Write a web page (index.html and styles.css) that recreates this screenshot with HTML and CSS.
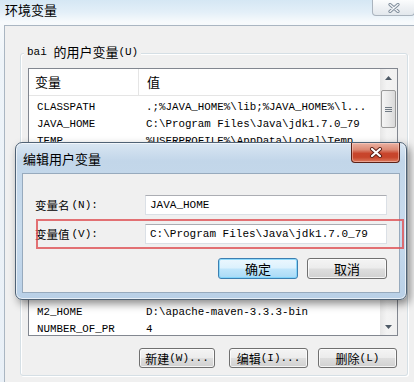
FILE: index.html
```html
<!DOCTYPE html>
<html>
<head>
<meta charset="utf-8">
<title>环境变量</title>
<link rel="stylesheet" href="styles.css">
</head>
<body>
<div class="win">
  <div class="titlebar">
    <span class="title">环境变量</span>
    <div class="wclose">
      <svg width="12" height="10" viewBox="0 0 12 10"><path d="M2 1.5 L10 8.5 M10 1.5 L2 8.5" stroke="#7d8b99" stroke-width="3.2" stroke-linecap="round"/><path d="M2 1.5 L10 8.5 M10 1.5 L2 8.5" stroke="#f4f6f8" stroke-width="1.4" stroke-linecap="round"/></svg>
    </div>
  </div>
  <div class="client">
    <div class="group">
      <div class="legend"><span>bai&nbsp;</span><span class="zh z13">的用户变量</span><span>(U)</span></div>
      <div class="list">
        <div class="lmain">
          <div class="lhead"><div class="c1 zh">变量</div><div class="c2 zh">值</div></div>
          <div class="rows">
            <div class="row"><span class="c1">CLASSPATH</span><span class="c2">.;%JAVA_HOME%\lib;%JAVA_HOME%\l...</span></div>
            <div class="row"><span class="c1">JAVA_HOME</span><span class="c2">C:\Program Files\Java\jdk1.7.0_79</span></div>
            <div class="row"><span class="c1">TEMP</span><span class="c2">%USERPROFILE%\AppData\Local\Temp</span></div>
            <div class="rows-covered"></div>
            <div class="row"><span class="c1">M2_HOME</span><span class="c2">D:\apache-maven-3.3.3-bin</span></div>
            <div class="row"><span class="c1">NUMBER_OF_PR</span><span class="c2">4</span></div>
          </div>
        </div>
        <div class="vscroll">
          <div class="sbtn"><svg width="7" height="4" viewBox="0 0 7 4"><path d="M0 4 L3.5 0 L7 4 Z" fill="#4e5a66"/></svg></div>
          <div class="thumb"><svg width="7" height="7" viewBox="0 0 7 7"><path d="M0 1.5 H7 M0 3.5 H7 M0 5.5 H7" stroke="#707a84" stroke-width="1"/></svg></div>
          <div class="strack"></div>
          <div class="sbtn"><svg width="7" height="4" viewBox="0 0 7 4"><path d="M0 0 L3.5 4 L7 0 Z" fill="#4e5a66"/></svg></div>
        </div>
      </div>
      <div class="gbtns">
        <div class="btn b-new"><span class="zh z12">新建</span><span>(W)...</span></div>
        <div class="btn b-edit"><span class="zh z12">编辑</span><span>(I)...</span></div>
        <div class="btn b-del"><span class="zh z12">删除</span><span>(L)</span></div>
      </div>
    </div>
  </div>

  <div class="dialog">
    <div class="dtitlebar">
      <span class="dtitle zh">编辑用户变量</span>
      <div class="dclose">
        <svg width="14" height="11" viewBox="0 0 14 11"><path d="M3 2 L11 9 M11 2 L3 9" stroke="#5a1d14" stroke-width="4" stroke-linecap="round"/><path d="M3 2 L11 9 M11 2 L3 9" stroke="#ffffff" stroke-width="2.2" stroke-linecap="round"/></svg>
      </div>
    </div>
    <div class="dclient">
      <div class="frow">
        <div class="flabel"><span class="zh z11">变量名</span><span>(N):</span></div>
        <div class="finput">JAVA_HOME</div>
      </div>
      <div class="frow r2">
        <div class="flabel"><span class="zh z11">变量值</span><span>(V):</span></div>
        <div class="finput">C:\Program Files\Java\jdk1.7.0_79</div>
      </div>
      <div class="dbtns">
        <div class="btn dbtn ok"><span class="zh z13">确定</span></div>
        <div class="btn dbtn"><span class="zh z13">取消</span></div>
      </div>
    </div>
    <div class="mark"></div>
  </div>
</div>
</body>
</html>
```
FILE: styles.css
```css
* { box-sizing: border-box; margin: 0; padding: 0; }
html, body { width: 414px; height: 382px; overflow: hidden; }
body {
  font-family: "Liberation Mono", "Noto Sans CJK SC", monospace;
  font-size: 11px;
  color: #000;
  background: #eef4f9;
}
.zh { font-family: "Noto Sans CJK SC", sans-serif; }
.z11 { font-size: 11.5px; }
.z12 { font-size: 12px; }
.z13 { font-size: 13px; }

.win {
  position: relative;
  width: 414px;
  height: 382px;
  display: flex;
  flex-direction: column;
  background: linear-gradient(180deg, #d5e7f4 0, #e3eff8 12px, #f7fafc 22px, #eef4f9 60px, #e9f0f7 100%);
}
.titlebar {
  height: 25px;
  flex: none;
  display: flex;
  justify-content: space-between;
  align-items: flex-start;
}
.title {
  font-family: "Noto Sans CJK SC", sans-serif;
  font-size: 13px;
  line-height: 20px;
  padding-left: 5px;
}
.wclose {
  width: 43px;
  height: 16px;
  margin-right: -1px;
  border: 1px solid #aab4be;
  border-top: none;
  border-radius: 0 0 4px 4px;
  background: linear-gradient(180deg, #fbfcfd, #eef1f4 50%, #e3e8ed);
  display: flex;
  align-items: center;
  justify-content: center;
}
.client {
  flex: 1;
  margin-left: 4px;
  border-top: 1px solid #aab6c2;
  border-left: 1px solid #aab6c2;
  background: #f0f0f0;
}

.group {
  margin: 27px 0 0 15px;
  width: 388px;
  height: 323px;
  border: 1px solid #d5dfe5;
  border-radius: 3px;
  box-shadow: inset 1px 1px 0 #fff, 1px 1px 0 #fff;
  display: flex;
  flex-direction: column;
}
.legend {
  margin: -10px 0 0 3px;
  padding: 0 3px;
  width: max-content;
  height: 16px;
  background: #f0f0f0;
  display: flex;
  align-items: center;
  line-height: 16px;
}

.list {
  margin: 8px 0 0 7px;
  width: 370px;
  height: 268px;
  flex: none;
  border: 1px solid #828790;
  background: #fff;
  display: flex;
}
.lmain { flex: 1; overflow: hidden; }
.lhead {
  height: 27px;
  display: flex;
  border-bottom: 1px solid #e5e5e5;
}
.lhead .c1 {
  width: 110px;
  padding-left: 6px;
  border-right: 1px solid #e5e5e5;
  font-size: 13px;
  line-height: 26px;
}
.lhead .c2 {
  padding-left: 8px;
  font-size: 13px;
  line-height: 26px;
}
.rows { padding-top: 2px; }
.row {
  height: 17px;
  display: flex;
  align-items: center;
  white-space: nowrap;
  font-size: 10.8px;
}
.rows-covered { height: 154px; }
.row .c1 { width: 109px; flex: none; padding-left: 8px; overflow: hidden; }
.row .c2 { padding-left: 8px; }

.vscroll {
  width: 17px;
  flex: none;
  display: flex;
  flex-direction: column;
  background: linear-gradient(90deg, #e6e6e6, #f3f3f3 40%, #f0f0f0);
}
.sbtn {
  height: 17px;
  flex: none;
  display: flex;
  align-items: center;
  justify-content: center;
}
.thumb {
  margin: 4px 1px 0 1px;
  height: 38px;
  flex: none;
  border: 1px solid #9a9a9a;
  border-radius: 2px;
  background: linear-gradient(90deg, #f5f5f5, #e9e9e9 50%, #d9d9d9);
  display: flex;
  align-items: center;
  justify-content: center;
}
.strack { flex: 1; }

.gbtns {
  display: flex;
  justify-content: flex-end;
  margin: 12px 10px 0 0;
}
.btn {
  height: 20px;
  border: 1px solid #707070;
  border-radius: 3px;
  background: linear-gradient(180deg, #f4f4f4 0, #ececec 48%, #dedede 52%, #d0d0d0 100%);
  box-shadow: inset 0 0 0 1px rgba(255, 255, 255, 0.75);
  display: flex;
  align-items: center;
  justify-content: center;
  white-space: nowrap;
}
.b-new { width: 76px; }
.b-edit { width: 79px; margin-left: 14px; }
.b-del { width: 79px; margin-left: 10px; }

.dialog {
  position: absolute;
  left: 15px;
  top: 142px;
  width: 392px;
  height: 158px;
  border: 1px solid #4f6275;
  border-radius: 7px;
  background: linear-gradient(180deg, #d9e6f2 0, #c2d6e9 18px, #c8dbed 55%, #b9d0e7 100%);
  box-shadow: inset 0 0 0 1px rgba(255, 255, 255, 0.65), 3px 4px 9px rgba(0, 0, 0, 0.45);
  display: flex;
  flex-direction: column;
}
.dtitlebar {
  height: 30px;
  flex: none;
  display: flex;
  justify-content: space-between;
  align-items: flex-start;
}
.dtitle {
  font-size: 13px;
  line-height: 16px;
  padding: 8px 0 0 7px;
}
.dclose {
  width: 49px;
  height: 20px;
  margin-right: 6px;
  border: 1px solid #5b2117;
  border-top: none;
  border-radius: 0 0 4px 4px;
  background: linear-gradient(180deg, #eab2a3 0, #dc8a75 35%, #c8452c 55%, #c7452b 75%, #dc7a5e 100%);
  box-shadow: inset 0 0 0 1px rgba(255, 220, 210, 0.45);
  display: flex;
  align-items: center;
  justify-content: center;
}
.dclient {
  flex: 1;
  margin: 0 6px 6px 6px;
  border: 1px solid #97aabd;
  background: #f0f0f0;
  padding: 21px 12px 0 0;
  display: flex;
  flex-direction: column;
}
.frow {
  height: 20px;
  display: flex;
  align-items: center;
}
.frow.r2 { margin-top: 9px; }
.flabel {
  width: 122px;
  flex: none;
  padding-left: 12px;
  display: flex;
  align-items: center;
  white-space: nowrap;
}
.flabel span + span { margin-left: 2px; }
.finput {
  flex: 1;
  height: 20px;
  background: #fff;
  border: 1px solid #dbe0e6;
  border-top-color: #abadb3;
  padding-left: 4px;
  line-height: 18px;
  white-space: nowrap;
}
.dbtns {
  display: flex;
  justify-content: flex-end;
  gap: 9px;
  margin-top: 14px;
}
.dbtn { width: 80px; height: 21px; }
.dbtn.ok {
  border-color: #3c7fb1;
  background: linear-gradient(180deg, #ebf7fe 0, #dcf1fd 48%, #c1e6fb 52%, #a9daf6 100%);
  box-shadow: inset 0 0 0 1px rgba(120, 210, 250, 0.8);
}
.mark {
  position: absolute;
  left: 20px;
  top: 76px;
  width: 368px;
  height: 30px;
  border: 2px solid rgba(222, 80, 84, 0.8);
}
```
